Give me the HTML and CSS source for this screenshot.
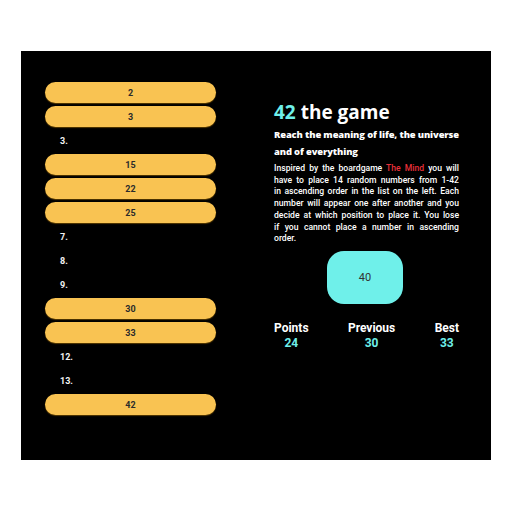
FILE: index.html
```html
<!DOCTYPE html>
<html>
<head>
<meta charset="utf-8">
<link rel="stylesheet" href="styles.css">
</head>
<body>
<div class="panel">
  <ol class="slots">
    <li class="pill">2</li>
    <li class="pill">3</li>
    <li class="empty">3.</li>
    <li class="pill">15</li>
    <li class="pill">22</li>
    <li class="pill">25</li>
    <li class="empty">7.</li>
    <li class="empty">8.</li>
    <li class="empty">9.</li>
    <li class="pill">30</li>
    <li class="pill">33</li>
    <li class="empty">12.</li>
    <li class="empty">13.</li>
    <li class="pill">42</li>
  </ol>
  <div class="info">
    <h1 class="title"><span class="accent">42</span> the game</h1>
    <h2 class="subtitle">Reach the meaning of life, the universe and of everything</h2>
    <p class="desc">
      <span class="line">Inspired by the boardgame <span class="red">The Mind</span> you will</span>
      <span class="line">have to place 14 random numbers from 1-42</span>
      <span class="line">in ascending order in the list on the left. Each</span>
      <span class="line">number will appear one after another and you</span>
      <span class="line">decide at which position to place it. You lose</span>
      <span class="line">if you cannot place a number in ascending</span>
      <span class="last">order.</span>
    </p>
    <div class="current-wrap"><div class="current">40</div></div>
    <div class="stats">
      <div class="stat"><div class="label">Points</div><div class="value">24</div></div>
      <div class="stat"><div class="label">Previous</div><div class="value">30</div></div>
      <div class="stat"><div class="label">Best</div><div class="value">33</div></div>
    </div>
  </div>
</div>
</body>
</html>
```
FILE: styles.css
```css
html, body {
  margin: 0;
  padding: 0;
  background: #ffffff;
}
body {
  padding: 51px 0 0 21px;
}
.panel {
  width: 470px;
  height: 409px;
  background: #000000;
  display: flex;
  align-items: flex-start;
  box-sizing: border-box;
  padding: 31px 32px 0 24px;
}
.slots {
  list-style: none;
  margin: 0;
  padding: 0;
  width: 171px;
  flex: none;
  display: flex;
  flex-direction: column;
  gap: 3px;
}
.slots li {
  height: 21px;
  box-sizing: border-box;
  font-family: Roboto, "Liberation Sans", sans-serif;
  font-size: 9px;
  font-weight: 700;
  line-height: 22px;
}
.pill {
  background: #f9c352;
  border-radius: 11px;
  text-align: center;
  color: #2b2b2b;
  box-shadow: 0 1px 1px rgba(120, 80, 0, 0.7);
}
.empty {
  color: #f2f2f2;
  padding-left: 15px;
}
.info {
  margin-left: 58px;
  width: 185px;
  flex: none;
  padding-top: 19px;
}
.title {
  margin: 0;
  font-family: "Open Sans", sans-serif;
  font-size: 19px;
  font-weight: 700;
  line-height: 22px;
  color: #ffffff;
}
.accent {
  color: #6ff0ea;
}
.subtitle {
  margin: 3px 0 0;
  font-family: "Open Sans", sans-serif;
  font-size: 9.4px;
  font-weight: 800;
  letter-spacing: -0.12px;
  line-height: 17px;
  color: #ffffff;
}
.desc {
  margin: 3px 0 0;
  font-family: Roboto, "Open Sans", sans-serif;
  font-size: 8.6px;
  font-weight: 500;
  line-height: 11.7px;
  color: #ffffff;
}
.line {
  display: block;
  white-space: nowrap;
  text-align: justify;
  text-align-last: justify;
}
.last {
  display: block;
}
.red {
  color: #e8303a;
}
.current-wrap {
  display: flex;
  justify-content: center;
  margin-top: 6px;
  padding-right: 3px;
}
.current {
  width: 76px;
  height: 53px;
  border-radius: 17px;
  background: #6ff0ea;
  color: #333333;
  font-family: Roboto, "Liberation Sans", sans-serif;
  font-size: 11px;
  display: flex;
  align-items: center;
  justify-content: center;
}
.stats {
  display: flex;
  justify-content: space-between;
  margin-top: 17px;
  font-family: Roboto, "Liberation Sans", sans-serif;
  font-weight: 700;
  font-size: 12px;
  line-height: 15px;
  text-align: center;
}
.label {
  color: #ffffff;
}
.value {
  color: #6ff0ea;
}
```
